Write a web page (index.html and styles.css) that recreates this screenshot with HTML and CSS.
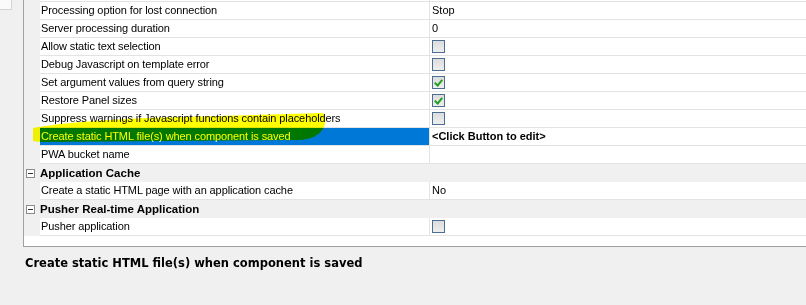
FILE: index.html
```html
<!DOCTYPE html>
<html lang="en">

<head>
    <meta charset="UTF-8">
    <title>Component Properties</title>
    <link rel="stylesheet" href="styles.css">
</head>

<body>
    <div class="window">
        <div class="top">
            <div class="side">
                <div class="stub"></div>
            </div>
            <div class="grid">
                <div class="row cut"><div class="gutter"></div><div class="name"></div><div class="value"></div></div>
                <div class="row"><div class="gutter"></div><div class="name">Processing option for lost connection</div><div class="value">Stop</div></div>
                <div class="row"><div class="gutter"></div><div class="name">Server processing duration</div><div class="value">0</div></div>
                <div class="row"><div class="gutter"></div><div class="name">Allow static text selection</div><div class="value"><span class="check"></span></div></div>
                <div class="row"><div class="gutter"></div><div class="name">Debug Javascript on template error</div><div class="value"><span class="check"></span></div></div>
                <div class="row"><div class="gutter"></div><div class="name">Set argument values from query string</div><div class="value"><span class="check on"></span></div></div>
                <div class="row"><div class="gutter"></div><div class="name">Restore Panel sizes</div><div class="value"><span class="check on"></span></div></div>
                <div class="row"><div class="gutter"></div><div class="name">Suppress warnings if Javascript functions contain placeholders</div><div class="value"><span class="check"></span></div></div>
                <div class="row selected"><div class="gutter"></div><div class="name">Create static HTML file(s) when component is saved</div><div class="value bold">&lt;Click Button to edit&gt;</div></div>
                <div class="row"><div class="gutter"></div><div class="name">PWA bucket name</div><div class="value"></div></div>
                <div class="category"><span class="toggle"></span>Application Cache</div>
                <div class="row"><div class="gutter"></div><div class="name">Create a static HTML page with an application cache</div><div class="value">No</div></div>
                <div class="category"><span class="toggle"></span>Pusher Real-time Application</div>
                <div class="row"><div class="gutter"></div><div class="name">Pusher application</div><div class="value"><span class="check"></span></div></div>
                <div class="filler"></div>
            </div>
        </div>
        <div class="desc">Create static HTML file(s) when component is saved</div>
    </div>

    <!-- highlighter stroke drawn over the screenshot -->
    <svg class="marker" width="806" height="305" viewBox="0 0 806 305">
        <path d="M33,128 C60,123 100,120 145,118 L323,113 Q328,120 323,129 Q317,139 300,140 L40,142 L33,141 Z" fill="#ffff00" />
    </svg>
</body>

</html>
```

FILE: styles.css
```css
body {
    margin: 0;
    background: #f0f0f0;
    font-family: "Liberation Sans", Arial, sans-serif;
    font-size: 11px;
    color: #000;
}

.window {
    width: 806px;
    height: 305px;
    overflow: hidden;
}

.top {
    display: flex;
}

.side {
    width: 23px;
    flex: none;
}

.stub {
    width: 11px;
    height: 9px;
    background: #fafafa;
    border-right: 1px solid #d4d4d4;
    border-bottom: 1px solid #d4d4d4;
}

.grid {
    flex: 1;
    height: 246px;
    background: #fff;
    border-left: 1px solid #a0a0a0;
    border-bottom: 1px solid #a0a0a0;
    display: flex;
    flex-direction: column;
}

.row {
    display: flex;
    height: 18px;
    flex: none;
}

.row.cut {
    height: 2px;
}

.gutter {
    width: 16px;
    flex: none;
    background: #f0f0f0;
}

.name {
    width: 388px;
    flex: none;
    padding-left: 1px;
    border-bottom: 1px solid #e3e3e3;
    border-right: 1px solid #e3e3e3;
    line-height: 17px;
    letter-spacing: -0.1px;
    white-space: nowrap;
    overflow: hidden;
}

.value {
    flex: 1;
    padding-left: 2px;
    border-bottom: 1px solid #e3e3e3;
    line-height: 17px;
    display: flex;
    align-items: center;
    white-space: nowrap;
}

.value.bold {
    font-weight: bold;
}

.selected .name {
    background: #0078d7;
    color: #fff;
}

.check {
    width: 11px;
    height: 11px;
    border: 1px solid #4d6e94;
    background: linear-gradient(#dcdcdc, #eeeeee);
    position: relative;
}

.check.on::after {
    content: '';
    position: absolute;
    left: 3px;
    top: 1px;
    width: 3px;
    height: 6px;
    border-right: 2px solid #22a022;
    border-bottom: 2px solid #22a022;
    transform: rotate(40deg);
}

.category {
    height: 18px;
    flex: none;
    background: #f0f0f0;
    display: flex;
    align-items: center;
    font-weight: bold;
    font-size: 11.5px;
}

.toggle {
    width: 7px;
    height: 7px;
    margin: 0 5px 0 2px;
    border: 1px solid #8c8c8c;
    background: #fff;
    position: relative;
}

.toggle::after {
    content: '';
    position: absolute;
    left: 1px;
    top: 3px;
    width: 5px;
    height: 1px;
    background: #333;
}

.filler {
    flex: 1;
}

.desc {
    padding: 9px 0 0 25px;
    font-family: "DejaVu Sans", Verdana, sans-serif;
    font-weight: bold;
    font-size: 11.5px;
}

.marker {
    position: absolute;
    left: 0;
    top: 0;
    mix-blend-mode: multiply;
    pointer-events: none;
}
```
